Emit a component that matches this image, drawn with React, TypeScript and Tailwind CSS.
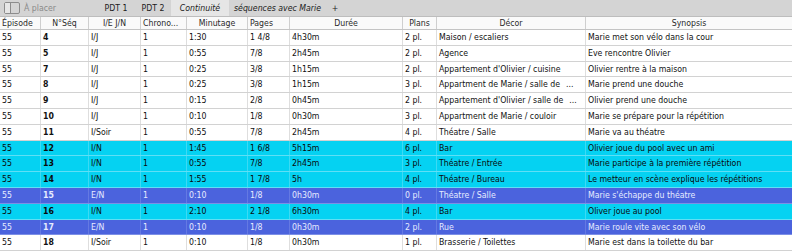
import React from "react";

type Row = {
  ep: string;
  seq: string;
  ie: string;
  chrono: string;
  min: string;
  pages: string;
  duree: string;
  plans: string;
  decor: string;
  decorMore?: boolean;
  syn: string;
  kind: "w" | "c" | "b";
};

const rows: Row[] = [
  { ep: "55", seq: "4", ie: "I/J", chrono: "1", min: "1:30", pages: "1 4/8", duree: "4h30m", plans: "2 pl.", decor: "Maison / escaliers", syn: "Marie met son vélo dans la cour", kind: "w" },
  { ep: "55", seq: "5", ie: "I/J", chrono: "1", min: "0:55", pages: "7/8", duree: "2h45m", plans: "2 pl.", decor: "Agence", syn: "Eve rencontre Olivier", kind: "w" },
  { ep: "55", seq: "7", ie: "I/J", chrono: "1", min: "0:25", pages: "3/8", duree: "1h15m", plans: "2 pl.", decor: "Appartement d'Olivier / cuisine", syn: "Olivier rentre à la maison", kind: "w" },
  { ep: "55", seq: "8", ie: "I/J", chrono: "1", min: "0:25", pages: "3/8", duree: "1h15m", plans: "3 pl.", decor: "Appartment de Marie / salle de", decorMore: true, syn: "Marie prend une douche", kind: "w" },
  { ep: "55", seq: "9", ie: "I/J", chrono: "1", min: "0:15", pages: "2/8", duree: "0h45m", plans: "2 pl.", decor: "Appartement d'Olivier / salle de", decorMore: true, syn: "Olivier prend une douche", kind: "w" },
  { ep: "55", seq: "10", ie: "I/J", chrono: "1", min: "0:10", pages: "1/8", duree: "0h30m", plans: "3 pl.", decor: "Appartment de Marie / couloir", syn: "Marie se prépare pour la répétition", kind: "w" },
  { ep: "55", seq: "11", ie: "I/Soir", chrono: "1", min: "0:55", pages: "7/8", duree: "2h45m", plans: "4 pl.", decor: "Théatre / Salle", syn: "Marie va au théatre", kind: "w" },
  { ep: "55", seq: "12", ie: "I/N", chrono: "1", min: "1:45", pages: "1 6/8", duree: "5h15m", plans: "6 pl.", decor: "Bar", syn: "Olivier joue du pool avec un ami", kind: "c" },
  { ep: "55", seq: "13", ie: "I/N", chrono: "1", min: "0:55", pages: "7/8", duree: "2h45m", plans: "3 pl.", decor: "Théatre / Entrée", syn: "Marie participe à la première répétition", kind: "c" },
  { ep: "55", seq: "14", ie: "I/N", chrono: "1", min: "1:55", pages: "1 7/8", duree: "5h", plans: "4 pl.", decor: "Théatre / Bureau", syn: "Le metteur en scène explique les répétitions", kind: "c" },
  { ep: "55", seq: "15", ie: "E/N", chrono: "1", min: "0:10", pages: "1/8", duree: "0h30m", plans: "0 pl.", decor: "Théatre / Salle", syn: "Marie s'échappe du théatre", kind: "b" },
  { ep: "55", seq: "16", ie: "I/N", chrono: "1", min: "2:10", pages: "2 1/8", duree: "6h30m", plans: "4 pl.", decor: "Bar", syn: "Oliver joue au pool", kind: "c" },
  { ep: "55", seq: "17", ie: "E/N", chrono: "1", min: "0:10", pages: "1/8", duree: "0h30m", plans: "2 pl.", decor: "Rue", syn: "Marie roule vite avec son vélo", kind: "b" },
  { ep: "55", seq: "18", ie: "I/Soir", chrono: "1", min: "0:10", pages: "1/8", duree: "0h30m", plans: "1 pl.", decor: "Brasserie / Toilettes", syn: "Marie est dans la toilette du bar", kind: "w" },
];

const rowStyle = {
  w: "bg-white text-[#111] border-[#d2d2d2]",
  c: "bg-[#05d2f2] text-[#0a0a0a] border-[#5fdff5]",
  b: "bg-[#4b63dd] text-[#e6ecff] border-[#7c8fe6]",
};
const cellBorder = {
  w: "border-[#dedede]",
  c: "border-[#3cdaf4]",
  b: "border-[#6479e2]",
};

function SidebarIcon() {
  return (
    <svg width="16" height="12" viewBox="0 0 16 12" fill="none">
      <rect x="0.5" y="0.5" width="15" height="11" rx="1.5" stroke="#8c8c8c" />
      <line x1="6.5" y1="1" x2="6.5" y2="11" stroke="#8c8c8c" />
      <rect x="1" y="1" width="5" height="10" fill="#e6e6e6" />
    </svg>
  );
}

function Cell({
  w,
  first,
  kind,
  bold,
  children,
}: {
  w: string;
  first?: boolean;
  kind: Row["kind"];
  bold?: boolean;
  children: React.ReactNode;
}) {
  return (
    <div
      className={`${w} h-full flex items-center overflow-hidden whitespace-nowrap ${
        first ? "pl-[2px]" : `border-l ${cellBorder[kind]} pl-[2px]`
      } ${bold ? "font-bold" : ""}`}
    >
      {children}
    </div>
  );
}

function Head({ w, first, align, children }: { w: string; first?: boolean; align?: "l" | "c"; children: React.ReactNode }) {
  return (
    <div
      className={`${w} h-full flex items-center overflow-hidden whitespace-nowrap ${
        first ? "pl-[2px]" : "border-l border-[#cfcfcf] pl-[2px]"
      } ${align === "c" ? "justify-center pr-[2px]" : ""}`}
    >
      {children}
    </div>
  );
}

export default function App() {
  return (
    <div className="w-[792px] h-[252px] overflow-hidden bg-white font-['DejaVu_Sans_Condensed','DejaVu_Sans',sans-serif] text-[8.7px] [font-stretch:condensed] leading-none">
      {/* tab bar */}
      <div className="h-[17px] flex items-stretch bg-[#d4d4d4] border-b border-[#bdbdbd] text-[#1c1c1c]">
        <div className="w-[97px] flex items-center pl-[4px] gap-[4px] text-[#8a8a8a]">
          <SidebarIcon />
          <span>À placer</span>
        </div>
        <div className="w-[38px] flex items-center justify-center">PDT 1</div>
        <div className="w-[36px] flex items-center justify-center">PDT 2</div>
        <div className="w-[58px] flex items-center justify-center bg-[#e6e6e6] italic">Continuité</div>
        <div className="w-[97px] flex items-center justify-center italic">séquences avec Marie</div>
        <div className="w-[18px] flex items-center justify-center">+</div>
      </div>
      {/* header */}
      <div className="h-[13px] flex bg-[#fafafa] border-b border-[#c4c4c4] text-[#2a2a2a]">
        <Head w="w-[40px]" first>Épisode</Head>
        <Head w="w-[48px]" align="c">N°Séq</Head>
        <Head w="w-[52px]" align="c">I/E J/N</Head>
        <Head w="w-[46px]">Chrono...</Head>
        <Head w="w-[61px]" align="c">Minutage</Head>
        <Head w="w-[42px]">Pages</Head>
        <Head w="w-[113px]" align="c">Durée</Head>
        <Head w="w-[34px]" align="c">Plans</Head>
        <Head w="w-[149px]" align="c">Décor</Head>
        <Head w="w-[207px]" align="c">Synopsis</Head>
      </div>
      {/* rows */}
      {rows.map((r, i) => (
        <div key={i} className={`h-[15.8px] flex border-b ${rowStyle[r.kind]}`}>
          <Cell w="w-[40px]" first kind={r.kind}>{r.ep}</Cell>
          <Cell w="w-[48px]" kind={r.kind} bold>{r.seq}</Cell>
          <Cell w="w-[52px]" kind={r.kind}>{r.ie}</Cell>
          <Cell w="w-[46px]" kind={r.kind}>{r.chrono}</Cell>
          <Cell w="w-[61px]" kind={r.kind}>{r.min}</Cell>
          <Cell w="w-[42px]" kind={r.kind}>{r.pages}</Cell>
          <Cell w="w-[113px]" kind={r.kind}>{r.duree}</Cell>
          <Cell w="w-[34px]" kind={r.kind}>{r.plans}</Cell>
          <Cell w="w-[149px]" kind={r.kind}>
            <span>{r.decor}</span>
            {r.decorMore && <span className="ml-[6px]">...</span>}
          </Cell>
          <Cell w="w-[207px]" kind={r.kind}>{r.syn}</Cell>
        </div>
      ))}
    </div>
  );
}
